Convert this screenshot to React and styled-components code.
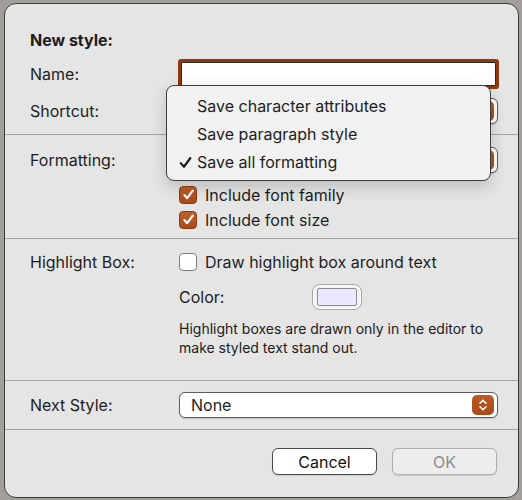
import React from "react";
import styled, { createGlobalStyle } from "styled-components";

const GlobalStyle = createGlobalStyle`
  html, body {
    margin: 0;
    padding: 0;
    background: #a29f9b;
  }
  body {
    font-family: "Inter", "Liberation Sans", sans-serif;
    color: #1d1d1d;
    -webkit-font-smoothing: antialiased;
  }
`;

const Dialog = styled.div`
  position: relative;
  box-sizing: border-box;
  width: 515px;
  height: 495px;
  margin: 3px 0 0 4px;
  background: #e5e5e5;
  border: 1px solid #3b3b3b;
  border-radius: 12px;
  display: flex;
  flex-direction: column;
  font-size: 16px;
`;

const Section = styled.div`
  display: flex;
  flex-direction: column;
  padding: ${(p) => p.$pad};
  border-bottom: 1px solid #a3a3a3;
`;

const Row = styled.div`
  display: grid;
  grid-template-columns: 149px 1fr;
  align-items: center;
  height: ${(p) => p.$h}px;
  margin-top: ${(p) => p.$mt || 0}px;
  padding: 0 20px 0 25px;
`;

const Title = styled.div`
  font-weight: 700;
  padding-left: 25px;
  height: 24px;
  display: flex;
  align-items: center;
`;

const Label = styled.div``;

const Field = styled.div`
  height: 24px;
  margin: 0 2px;
  background: #fff;
  border: 1px solid #2a2a2a;
  box-shadow: 0 0 0 3px #8d3a11;
  border-radius: 1px;
  box-sizing: border-box;
`;

const Popup = styled.div`
  height: 26px;
  box-sizing: border-box;
  background: #fff;
  border: 1px solid #5e5e5e;
  border-radius: 6px;
  display: flex;
  align-items: center;
  justify-content: space-between;
  padding: 0 3px 0 11px;
  box-shadow: 0 0.5px 1px rgba(0, 0, 0, 0.15);
`;

const Stepper = styled.span`
  width: 22px;
  height: 20px;
  border-radius: 5px;
  background: linear-gradient(#bd5a22, #a9481a);
  display: flex;
  align-items: center;
  justify-content: center;
`;

const CheckRow = styled.label`
  display: flex;
  align-items: center;
  gap: 8px;
`;

const Box = styled.span`
  width: 18px;
  height: 18px;
  box-sizing: border-box;
  border-radius: 4px;
  display: flex;
  align-items: center;
  justify-content: center;
  background: ${(p) => (p.$on ? "linear-gradient(#c0602a, #a9481a)" : "#fff")};
  border: 1px solid ${(p) => (p.$on ? "#8d3a11" : "#7d7d7d")};
`;

const ColorLine = styled.div`
  display: flex;
  align-items: center;
`;

const ColorLabel = styled.span`
  width: 133px;
`;

const ColorWell = styled.div`
  width: 50px;
  height: 26px;
  box-sizing: border-box;
  border: 1px solid #a5a5a5;
  border-radius: 8px;
  background: #f3f3f3;
  padding: 3px 4px;
  box-shadow: inset 0 0 0 1px #fff;
`;

const Swatch = styled.div`
  height: 100%;
  box-sizing: border-box;
  background: #e9e8ff;
  border: 1.5px solid #8d8c98;
  border-radius: 2px;
`;

const Help = styled.p`
  margin: 8px 0 0 174px;
  font-size: 14px;
  line-height: 19px;
  width: 312px;
  color: #202020;
`;

const Footer = styled.div`
  display: flex;
  justify-content: flex-end;
  gap: 15px;
  padding: 18px 21px 0 0;
`;

const Button = styled.button`
  width: 105px;
  height: 27px;
  font: inherit;
  font-size: 16px;
  border-radius: 6px;
  background: ${(p) => (p.disabled ? "#ededed" : "#fff")};
  color: ${(p) => (p.disabled ? "#8c8c8c" : "#111")};
  border: 1px solid ${(p) => (p.disabled ? "#adadad" : "#4a4a4a")};
  box-shadow: 0 0.5px 1px rgba(0, 0, 0, 0.12);
`;

const Menu = styled.div`
  position: absolute;
  left: 161px;
  top: 81px;
  width: 325px;
  height: 96px;
  box-sizing: border-box;
  background: #f1f1f1;
  border: 1px solid #3c3c3c;
  border-radius: 8px;
  box-shadow: 0 6px 16px rgba(0, 0, 0, 0.18);
  padding-top: 6px;
`;

const MenuItem = styled.div`
  height: 28px;
  display: flex;
  align-items: center;
  padding-left: 30px;
  position: relative;
`;

const Tick = styled.span`
  position: absolute;
  left: 11px;
  top: 6px;
`;

function Chevrons() {
  return (
    <svg width="10" height="14" viewBox="0 0 10 14">
      <path
        d="M2 5.2 L5 2.2 L8 5.2 M2 8.8 L5 11.8 L8 8.8"
        fill="none"
        stroke="#fff"
        strokeWidth="1.6"
        strokeLinecap="round"
        strokeLinejoin="round"
      />
    </svg>
  );
}

function Check({ color = "#fff", size = 13, weight = 2 }) {
  return (
    <svg width={size} height={size} viewBox="0 0 12 12">
      <path
        d="M2.2 6.5 L4.8 9.4 L9.9 2.4"
        fill="none"
        stroke={color}
        strokeWidth={weight}
        strokeLinecap="round"
        strokeLinejoin="round"
      />
    </svg>
  );
}

function Select({ value }) {
  return (
    <Popup>
      <span>{value}</span>
      <Stepper>
        <Chevrons />
      </Stepper>
    </Popup>
  );
}

function Checkbox({ on, children }) {
  return (
    <CheckRow>
      <Box $on={on}>{on && <Check />}</Box>
      {children}
    </CheckRow>
  );
}

export default function App() {
  return (
    <>
      <GlobalStyle />
      <Dialog>
        <Section $pad="24px 0 8px">
          <Title>New style:</Title>
          <Row $h={44}>
            <Label>Name:</Label>
            <Field />
          </Row>
          <Row $h={30}>
            <Label>Shortcut:</Label>
            <Select value="" />
          </Row>
        </Section>

        <Section $pad="12px 0 6px">
          <Row $h={26}>
            <Label>Formatting:</Label>
            <Select value="" />
          </Row>
          <Row $h={25} $mt={9}>
            <span />
            <Checkbox on>Include font family</Checkbox>
          </Row>
          <Row $h={25}>
            <span />
            <Checkbox on>Include font size</Checkbox>
          </Row>
        </Section>

        <Section $pad="11px 0 23px">
          <Row $h={24}>
            <Label>Highlight Box:</Label>
            <Checkbox>Draw highlight box around text</Checkbox>
          </Row>
          <Row $h={28} $mt={9}>
            <span />
            <ColorLine>
              <ColorLabel>Color:</ColorLabel>
              <ColorWell>
                <Swatch />
              </ColorWell>
            </ColorLine>
          </Row>
          <Help>
            Highlight boxes are drawn only in the editor to make styled text
            stand out.
          </Help>
        </Section>

        <Section $pad="11px 0 11px">
          <Row $h={26}>
            <Label>Next Style:</Label>
            <Select value="None" />
          </Row>
        </Section>

        <Footer>
          <Button>Cancel</Button>
          <Button disabled>OK</Button>
        </Footer>

        <Menu>
          <MenuItem>Save character attributes</MenuItem>
          <MenuItem>Save paragraph style</MenuItem>
          <MenuItem>
            <Tick>
              <Check color="#1a1a1a" size={15} weight={1.7} />
            </Tick>
            Save all formatting
          </MenuItem>
        </Menu>
      </Dialog>
    </>
  );
}
